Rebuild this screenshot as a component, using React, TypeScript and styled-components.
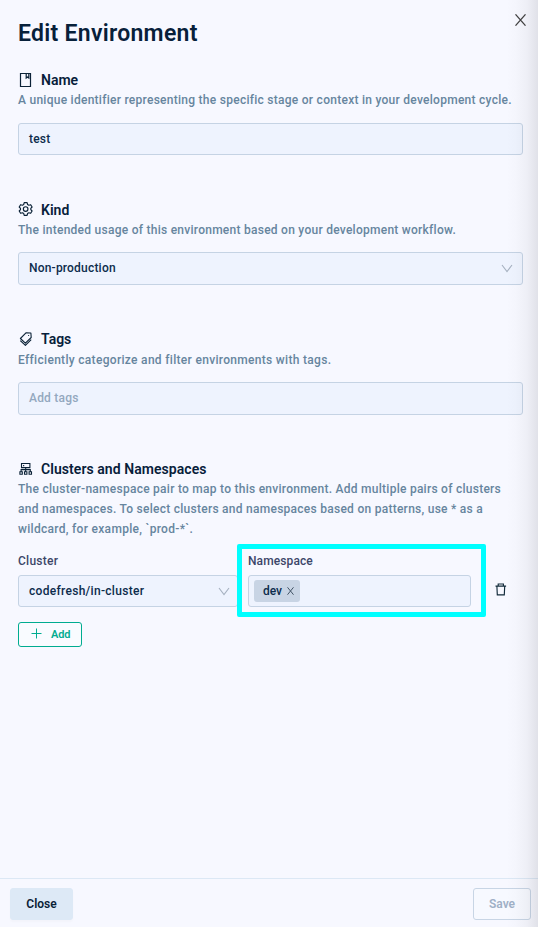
import React from "react";
import styled, { createGlobalStyle } from "styled-components";

const GlobalStyle = createGlobalStyle`
  *, *::before, *::after { box-sizing: border-box; }
  body { margin: 0; background: #f7f8ff; }
  button, input { font: inherit; }
`;

const Drawer = styled.div`
  position: relative;
  display: flex;
  flex-direction: column;
  width: 538px;
  height: 927px;
  overflow: hidden;
  background: #f7f8ff;
  color: #07203a;
  font-family: Roboto, "Liberation Sans", sans-serif;
  font-size: 12px;
  font-weight: 500;
`;

const EdgeShadow = styled.div`
  position: absolute;
  inset: 0 0 0 auto;
  width: 32px;
  pointer-events: none;
  background: linear-gradient(
    to right,
    rgba(40, 40, 50, 0) 0%,
    rgba(40, 40, 50, 0.012) 30%,
    rgba(40, 40, 50, 0.045) 65%,
    rgba(40, 40, 50, 0.11) 100%
  );
`;

const Header = styled.header`
  display: flex;
  justify-content: space-between;
  height: 70px;
  padding: 13px 11px 0 18px;
`;

const Title = styled.h1`
  margin: 7px 0 0;
  font-size: 23px;
  line-height: 28px;
  font-weight: 600;
  letter-spacing: 0.28px;
`;

const IconButton = styled.button`
  display: flex;
  align-items: center;
  justify-content: center;
  width: 14px;
  height: 14px;
  padding: 0;
  border: 0;
  background: none;
  color: inherit;
`;

const Body = styled.main`
  flex: 1;
  padding: 0 15px 0 18px;
`;

const Section = styled.section<{ $gap: number }>`
  margin-bottom: ${(p) => p.$gap}px;
`;

const SectionHeading = styled.h2`
  display: flex;
  align-items: center;
  gap: 7px;
  height: 20px;
  margin: 0;
  font-size: 14px;
  font-weight: 600;
  svg { flex: none; }
`;

const Tracked = styled.span<{ $spacing: number }>`
  letter-spacing: ${(p) => p.$spacing}px;
  white-space: nowrap;
`;

const Description = styled.p<{ $top?: number }>`
  display: flex;
  flex-direction: column;
  margin: ${(p) => p.$top ?? 0}px 0 0;
  color: #66859e;
  line-height: 20px;
`;

const Field = styled.div<{ $height: number; $top: number; $muted?: boolean; $right?: number }>`
  display: flex;
  align-items: center;
  justify-content: space-between;
  height: ${(p) => p.$height}px;
  margin-top: ${(p) => p.$top}px;
  padding: 0 ${(p) => p.$right ?? 9}px ${(p) => (p.$height > 32 ? 1 : 0)}px 10px;
  border: 1px solid #c5d3e4;
  border-radius: 3px;
  background: #eef3fe;
  color: ${(p) => (p.$muted ? "#93a8bf" : "#0c2c4c")};
`;

const PairRow = styled.div`
  position: relative;
  display: grid;
  grid-template-columns: 220px 223px 1fr;
  column-gap: 10px;
  margin-top: 12px;
`;

const FieldLabel = styled.div`
  height: 20px;
  line-height: 20px;
  color: #3c4669;
`;

const Tag = styled.span`
  display: flex;
  align-items: center;
  gap: 5px;
  width: 46px;
  height: 22px;
  margin-left: -5px;
  padding: 0 0 0 9px;
  border-radius: 3px;
  background: #c8d4e4;
`;

const DeleteCell = styled.div`
  display: flex;
  align-items: center;
  height: 32px;
  margin: 22px 0 0 13px;
`;

const Highlight = styled.div`
  position: absolute;
  left: 219px;
  top: -7px;
  width: 249px;
  height: 73px;
  border: 5px solid #00ffff;
  border-radius: 2px;
  pointer-events: none;
`;

const AddButton = styled.button`
  display: flex;
  align-items: center;
  gap: 9px;
  width: 64px;
  height: 25px;
  margin-top: 15px;
  padding: 0 0 0 12px;
  border: 1px solid #00ac90;
  border-radius: 3px;
  background: #f9fbff;
  color: #00ac90;
  font-size: 11px;
  font-weight: 600;
  svg { margin-bottom: 2px; }
`;

const Footer = styled.footer`
  display: flex;
  justify-content: space-between;
  height: 49px;
  padding: 9px 7px 0 10px;
  border-top: 1px solid #dce8f5;
`;

const FooterButton = styled.button<{ $outlined?: boolean }>`
  width: ${(p) => (p.$outlined ? 58 : 63)}px;
  height: 32px;
  padding: 0;
  border: 1px solid ${(p) => (p.$outlined ? "#c8d5e5" : "#dde9f6")};
  border-radius: 3px;
  background: ${(p) => (p.$outlined ? "#f7f9ff" : "#dde9f6")};
  color: ${(p) => (p.$outlined ? "#9fb0c6" : "#0a2136")};
  box-shadow: ${(p) => (p.$outlined ? "none" : "0 2px 2px rgba(0, 0, 0, 0.02)")};
  font-weight: 600;
`;

const Cross = ({ size, height, color, weight }: { size: number; height: number; color: string; weight: number }) => (
  <svg width={size} height={height} viewBox={`0 0 ${size} ${height}`} stroke={color} strokeWidth={weight} fill="none">
    <path d={`M.5 .3L${size - 0.5} ${height - 0.3}M${size - 0.5} .3L.5 ${height - 0.3}`} />
  </svg>
);

const Chevron = () => (
  <svg width="12" height="9" viewBox="0 0 12 9" fill="none" stroke="#a6b1c0" strokeWidth="1.1">
    <path d="M1 1l5 6.6L11 1" />
  </svg>
);

const iconProps = { width: 16, height: 16, viewBox: "0 0 16 16", fill: "none", stroke: "#0b2237" } as const;

const BookmarkIcon = () => (
  <svg {...iconProps} strokeWidth="1.2">
    <path d="M2.5 1.5h10v13h-10zM8.2 1.5v4.6l1.3-1 1.3 1V1.5" />
  </svg>
);

const GearIcon = () => (
  <svg {...iconProps} viewBox="0 1 16 16" strokeWidth="1.15" strokeLinejoin="round">
    <path d="M6.2 1.6h2.9l.5 1.9 1.2.7 1.9-.5 1.4 2.3-1.3 1.4v1.2l1.3 1.4-1.4 2.3-1.9-.5-1.2.7-.5 1.9H6.2l-.5-1.9-1.2-.7-1.9.5L1.2 10l1.3-1.4V7.4L1.2 6l1.4-2.3 1.9.5 1.2-.7z" />
    <circle cx="7.65" cy="8" r="2.3" />
  </svg>
);

const TagsIcon = () => (
  <svg {...iconProps} strokeWidth="1.1" strokeLinejoin="round">
    <path d="M8.2 1.7l4.7.3.3 4.5-5.8 5.7-5-4.7zM2.3 9.6l5.1 4.8 5.8-5.8" />
    <circle cx="10.6" cy="4.5" r=".6" fill="#0b2237" stroke="none" />
  </svg>
);

const ClusterIcon = () => (
  <svg {...iconProps} strokeWidth="1.1">
    <path d="M3.5 2.5h8.4v4.1H3.5zM7.7 6.6v4M3.1 10.6V8.6h9.2v2M1.9 10.7h2.4v2.6H1.9zM6.5 10.7h2.4v2.6H6.5zM11.1 10.7h2.4v2.6h-2.4zM5.1 4.6h1.1" />
  </svg>
);

const TrashIcon = () => (
  <svg width="12" height="13" viewBox="0 0 12 13" fill="none" stroke="#132b3b" strokeWidth="1.15">
    <path d="M.5 3.1h10.6M3.2 3V1h5.2v2M1.9 3.2l.4 8.7h7l.4-8.7" />
  </svg>
);

const PlusIcon = () => (
  <svg width="11" height="11" viewBox="0 0 11 11" stroke="#00ac90" strokeWidth="1">
    <path d="M5.5 .5v10M.5 5.5h10" />
  </svg>
);

export default function App() {
  return (
    <>
      <GlobalStyle />
      <Drawer>
        <Header>
          <Title>Edit Environment</Title>
          <IconButton aria-label="Close panel">
            <Cross size={11} height={12} color="#414141" weight={1.2} />
          </IconButton>
        </Header>
        <Body>
          <Section $gap={45}>
            <SectionHeading><BookmarkIcon /><Tracked $spacing={0}>Name</Tracked></SectionHeading>
            <Description>
              <Tracked $spacing={0.266}>A unique identifier representing the specific stage or context in your development cycle.</Tracked>
            </Description>
            <Field $height={32} $top={13}><Tracked $spacing={0.2}>test</Tracked></Field>
          </Section>
          <Section $gap={44}>
            <SectionHeading><GearIcon /><Tracked $spacing={0.05}>Kind</Tracked></SectionHeading>
            <Description>
              <Tracked $spacing={0.26}>The intended usage of this environment based on your development workflow.</Tracked>
            </Description>
            <Field $height={33} $top={12}><Tracked $spacing={0.2}>Non-production</Tracked><Chevron /></Field>
          </Section>
          <Section $gap={44}>
            <SectionHeading><TagsIcon /><Tracked $spacing={0}>Tags</Tracked></SectionHeading>
            <Description $top={1}>
              <Tracked $spacing={0.31}>Efficiently categorize and filter environments with tags.</Tracked>
            </Description>
            <Field $height={33} $top={12} $muted><Tracked $spacing={0.2}>Add tags</Tracked></Field>
          </Section>
          <Section $gap={0}>
            <SectionHeading><ClusterIcon /><Tracked $spacing={0.06}>Clusters and Namespaces</Tracked></SectionHeading>
            <Description>
              <Tracked $spacing={0.26}>The cluster-namespace pair to map to this environment. Add multiple pairs of clusters</Tracked>
              <Tracked $spacing={0.265}>and namespaces. To select clusters and namespaces based on patterns, use * as a</Tracked>
              <Tracked $spacing={0.3}>wildcard, for example, `prod-*`.</Tracked>
            </Description>
            <PairRow>
              <div>
                <FieldLabel><Tracked $spacing={0.25}>Cluster</Tracked></FieldLabel>
                <Field $height={32} $top={4} $right={7}><Tracked $spacing={0.3}>codefresh/in-cluster</Tracked><Chevron /></Field>
              </div>
              <div>
                <FieldLabel><Tracked $spacing={0.1}>Namespace</Tracked></FieldLabel>
                <Field $height={32} $top={4}>
                  <Tag><Tracked $spacing={0}>dev</Tracked><Cross size={7} height={8} color="#435466" weight={1} /></Tag>
                </Field>
              </div>
              <DeleteCell><IconButton aria-label="Delete pair"><TrashIcon /></IconButton></DeleteCell>
              <Highlight />
            </PairRow>
            <AddButton><PlusIcon /><Tracked $spacing={-0.1}>Add</Tracked></AddButton>
          </Section>
        </Body>
        <Footer>
          <FooterButton><Tracked $spacing={0}>Close</Tracked></FooterButton>
          <FooterButton $outlined><Tracked $spacing={0}>Save</Tracked></FooterButton>
        </Footer>
        <EdgeShadow />
      </Drawer>
    </>
  );
}
